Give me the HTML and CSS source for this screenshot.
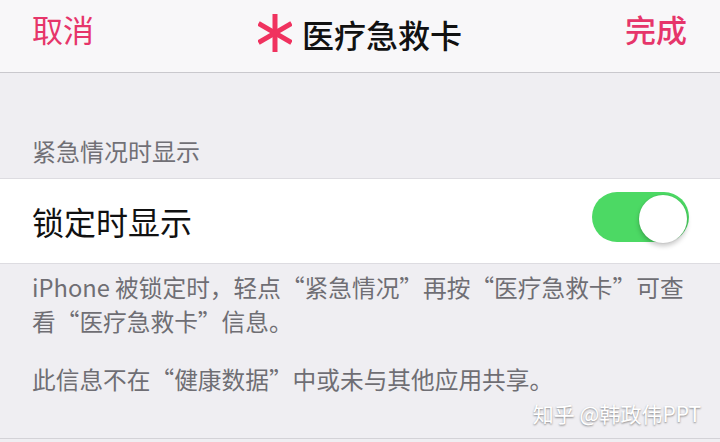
FILE: index.html
```html
<!DOCTYPE html>
<html lang="zh-CN">
<head>
  <meta charset="UTF-8" />
  <meta name="viewport" content="width=device-width, initial-scale=1.0"/>
  <title>医疗急救卡</title>
  <link rel="stylesheet" href="styles.css">
</head>
<body>

  <!-- Navigation bar -->
  <header class="nav">
    <span class="nav-btn">取消</span>
    <h1 class="nav-title">
      <svg class="star" viewBox="-17 -19 34 38" width="34" height="38">
        <line x1="0" y1="-19" x2="0" y2="19" />
        <line x1="-16.5" y1="-9.5" x2="16.5" y2="9.5" />
        <line x1="-16.5" y1="9.5" x2="16.5" y2="-9.5" />
      </svg>
      医疗急救卡
    </h1>
    <span class="nav-btn done">完成</span>
  </header>

  <main class="content">
    <div class="group-title">紧急情况时显示</div>

    <div class="cell">
      <span class="cell-label">锁定时显示</span>
      <span class="switch"><span class="knob"></span></span>
    </div>

    <div class="group-note">
      <p>iPhone 被锁定时，轻点“紧急情况”再按“医疗急救卡”可查看“医疗急救卡”信息。</p>
      <p>此信息不在“健康数据”中或未与其他应用共享。</p>
    </div>

    <div class="next-group"></div>

    <div class="watermark">知乎 @韩政伟PPT</div>
  </main>

</body>
</html>
```

FILE: styles.css
```css
body {
  margin: 0;
  padding: 0;
  width: 720px;
  height: 442px;
  overflow: hidden;
  background: #efeef2;
  font-family: "Noto Sans CJK SC", "Noto Sans", sans-serif;
}

/* nav bar */
.nav {
  height: 72px;
  background: #f8f7f9;
  border-bottom: 1px solid #c9c8cd;
  display: grid;
  grid-template-columns: 1fr auto 1fr;
  align-items: start;
  padding: 0 32px;
}

.nav-btn {
  font-size: 31px;
  color: #e6356a;
  line-height: 1;
  margin-top: 13px;
}

.nav-btn.done {
  justify-self: end;
  font-weight: 500;
  margin-right: 1px;
}

.nav-title {
  margin: 15px 0 0;
  display: flex;
  align-items: center;
  gap: 10px;
  font-size: 32px;
  font-weight: 500;
  color: #111;
  line-height: 1;
}

.star {
  stroke: #f0325f;
  stroke-width: 5;
  margin-top: -1px;
}

/* content */
.content {
  position: relative;
}

.group-title {
  padding: 61px 32px 0;
  font-size: 24px;
  line-height: 34px;
  color: #717076;
  margin-bottom: 10px;
}

.cell {
  background: #fff;
  border-top: 1px solid #dddce1;
  border-bottom: 1px solid #dddce1;
  height: 84px;
  display: flex;
  align-items: center;
  justify-content: space-between;
  padding: 0 31px 0 32px;
}

.cell-label {
  font-size: 32px;
  color: #111;
}

.switch {
  width: 97px;
  height: 50px;
  border-radius: 25px;
  background: #4cd964;
  display: flex;
  align-items: center;
  justify-content: flex-end;
  padding-right: 2px;
  box-sizing: border-box;
  margin-top: -8px;
}

.knob {
  width: 48px;
  height: 48px;
  border-radius: 50%;
  background: #fff;
  box-shadow: 0 3px 5px rgba(0, 0, 0, 0.22), 0 0 0 1px rgba(0, 0, 0, 0.04);
  margin-top: 3px;
}

.group-note {
  padding: 6px 32px 0;
  font-size: 23.7px;
  line-height: 34px;
  color: #6f6e74;
}

.group-note p {
  margin: 0;
}

.group-note p + p {
  margin-top: 24px;
}

.next-group {
  margin-top: 42px;
  border-top: 1px solid #d3d2d7;
  height: 20px;
}

.watermark {
  position: absolute;
  right: 19px;
  top: 328px;
  font-size: 21px;
  line-height: 24px;
  color: #fff;
  text-shadow: 0 1px 2px rgba(0, 0, 0, 0.45);
}
```
